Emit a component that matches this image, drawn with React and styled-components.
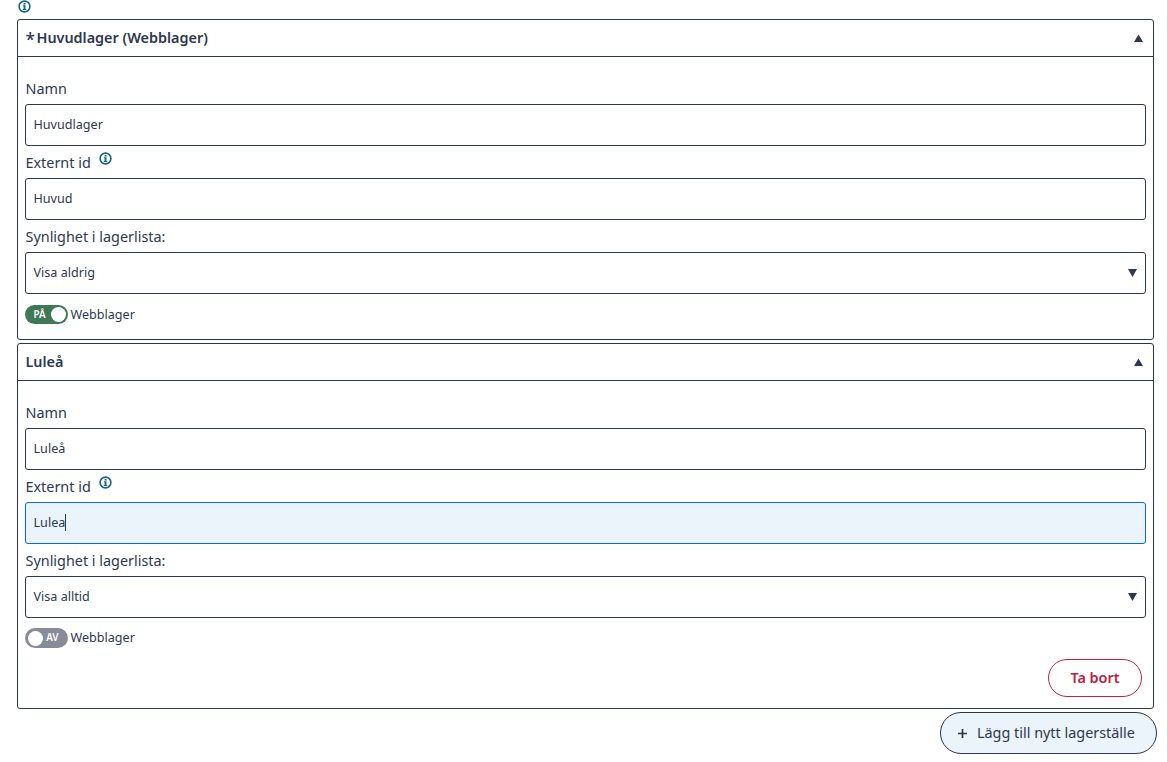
import React, { useState } from "react";
import styled, { createGlobalStyle } from "styled-components";

const stores = [
    {
        id: 1,
        title: "Huvudlager (Webblager)",
        main: true,
        name: "Huvudlager",
        externalId: "Huvud",
        visibility: "Visa aldrig",
        web: true,
    },
    {
        id: 2,
        title: "Luleå",
        main: false,
        name: "Luleå",
        externalId: "Lulea",
        visibility: "Visa alltid",
        web: false,
        editing: true,
    },
];

const InfoIcon = () => (
    <InfoSvg width="13" height="13" viewBox="0 0 13 13">
        <circle cx="6.5" cy="6.5" r="5.4" fill="none" stroke="#176482" strokeWidth="1.6" />
        <rect x="5.6" y="3" width="1.9" height="1.6" fill="#176482" />
        <path d="M4.9 5.3h2.6v3.6h.8v1H4.8v-1h.8V6.3h-.7z" fill="#176482" />
    </InfoSvg>
);

const StoreCard = ({ store }) => {

    const [ web, setWeb ] = useState(store.web);

    return (
        <Card>
            <CardHeader>
                <Title>{store.main && <Star>*</Star>}{store.title}</Title>
                <Arrow width="9" height="8" viewBox="0 0 9 8"><path d="M4.5 0.5L9 8H0z" /></Arrow>
            </CardHeader>
            <CardBody $main={store.main}>
                <Label>Namn</Label>
                <Field>{store.name}</Field>
                <Label>Externt id <InfoIcon /></Label>
                <Field $active={store.editing}>
                    {store.externalId}
                    {store.editing && <Caret />}
                </Field>
                <Label>Synlighet i lagerlista:</Label>
                <Field>
                    {store.visibility}
                    <SelectArrow width="9" height="8" viewBox="0 0 9 8"><path d="M0 0h9L4.5 8z" /></SelectArrow>
                </Field>
                <ToggleRow $on={web}>
                    <Toggle $on={web} onClick={() => setWeb(!web)}>
                        <ToggleText>{web ? "PÅ" : "AV"}</ToggleText>
                        <Knob />
                    </Toggle>
                    <ToggleLabel $on={web}>Webblager</ToggleLabel>
                </ToggleRow>
                {!store.main && <Actions><RemoveButton>Ta bort</RemoveButton></Actions>}
            </CardBody>
        </Card>
    )
}

const App = () => {
    return (
        <>
            <GlobalStyle />
            <Page>
                <TopInfo><InfoIcon /></TopInfo>
                <List>
                    {stores.map((store) => <StoreCard key={store.id} store={store} />)}
                </List>
                <Footer>
                    <AddButton>
                        <PlusSvg width="9" height="9" viewBox="0 0 9 9"><path d="M4.5 0v9M0 4.5h9" /></PlusSvg>
                        Lägg till nytt lagerställe
                    </AddButton>
                </Footer>
            </Page>
        </>
    )
}

const GlobalStyle = createGlobalStyle`
    * {
        box-sizing: border-box;
    }

    body {
        margin: 0;
        background: #fff;
        color: #2e384f;
        font-family: "Noto Sans", sans-serif;
        font-size: 14.4px;
        overflow: hidden;
    }
`;

const Page = styled.div`
    padding: 0 13px 0 17px;
`;

const InfoSvg = styled.svg`
    display: block;
    flex: none;
`;

const TopInfo = styled.div`
    height: 19px;
    padding-left: 1px;
`;

const List = styled.div`
    display: flex;
    flex-direction: column;
    gap: 3px;
`;

const Card = styled.section`
    border: 1px solid #2e3650;
    border-radius: 3px;
`;

const CardHeader = styled.div`
    display: flex;
    align-items: center;
    justify-content: space-between;
    height: 37px;
    padding: 0 10px 0 7.5px;
    border-bottom: 1px solid #2e3650;
`;

const Title = styled.h3`
    display: flex;
    margin: 0;
    font-size: 14.4px;
    font-weight: 600;
    line-height: 20px;
`;

const Star = styled.span`
    width: 11px;
    height: 20px;
    font-size: 17.3px;
    font-weight: 500;
    line-height: 24px;
`;

const Arrow = styled.svg`
    fill: #2e3650;
`;

const CardBody = styled.div`
    height: ${props => props.$main ? "282px" : "327px"};
    padding: 15px 7px 0;
`;

const Label = styled.div`
    display: flex;
    height: 32px;
    padding-left: 0.5px;
    line-height: 34px;
    white-space: pre;

    ${InfoSvg} {
        margin: 6px 0 0 4.5px;
    }
`;

const Field = styled.div`
    display: flex;
    align-items: center;
    height: 42px;
    padding: 0 8px 1px 7.5px;
    border: 1px solid ${props => props.$active ? "#0468f5" : "#2e3650"};
    border-radius: 3px;
    background: ${props => props.$active ? "#ebf3fb" : "#fff"};
    font-size: 12.6px;
`;

const Caret = styled.span`
    width: 1px;
    height: 17px;
    background: #2e3650;
`;

const SelectArrow = styled(Arrow)`
    margin-left: auto;
`;

const ToggleRow = styled.div`
    display: flex;
    align-items: center;
    gap: 2.5px;
    height: ${props => props.$on ? "19px" : "20px"};
    margin-top: ${props => props.$on ? "11px" : "10px"};
    font-size: 12.6px;
`;

const ToggleLabel = styled.span`
    margin-bottom: ${props => props.$on ? "0" : "2px"};
`;

const Toggle = styled.button`
    display: flex;
    flex-direction: ${props => props.$on ? "row" : "row-reverse"};
    align-items: center;
    justify-content: space-between;
    width: 43px;
    height: 100%;
    padding: ${props => props.$on ? "0 2.5px 0 8.5px" : "0 9.5px 0 3px"};
    border: none;
    border-radius: 10px;
    background: ${props => props.$on ? "#407855" : "#898b98"};
    font-family: inherit;
`;

const ToggleText = styled.span`
    color: white;
    font-size: 9.8px;
    font-weight: 600;
    line-height: 12px;
`;

const Knob = styled.span`
    width: 15px;
    height: 15px;
    border-radius: 50%;
    background: white;
`;

const Actions = styled.div`
    display: flex;
    justify-content: flex-end;
    padding: 11px 4px 0;
`;

const RemoveButton = styled.button`
    width: 94px;
    height: 38px;
    padding: 0 0 2px;
    border: 1px solid #c22345;
    border-radius: 19px;
    background: white;
    color: #b9223f;
    font-family: inherit;
    font-size: 14.4px;
    font-weight: 600;
`;

const Footer = styled.div`
    display: flex;
    justify-content: flex-end;
    margin: 3px -3px 0 0;
`;

const AddButton = styled.button`
    display: flex;
    align-items: center;
    gap: 10px;
    width: 217px;
    height: 42px;
    padding: 0 0 1px 17px;
    border: 1px solid #2e3650;
    border-radius: 21px;
    background: #ebf3fb;
    color: #2e384f;
    font-family: inherit;
    font-size: 14.4px;
    white-space: nowrap;
`;

const PlusSvg = styled.svg`
    flex: none;
    margin-top: 1px;
    stroke: #2e3650;
    stroke-width: 1.7;
`;

export default App;
